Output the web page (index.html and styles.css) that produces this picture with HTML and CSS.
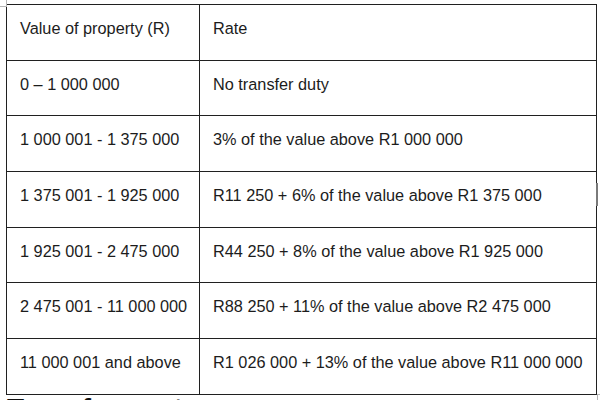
FILE: index.html
```html
<!DOCTYPE html>
<html lang="en">
<head>
<meta charset="utf-8">
<title>Transfer duty rates</title>
<link rel="stylesheet" href="styles.css">
</head>
<body>
<div class="page">
  <span class="corner corner-tl"></span>
  <span class="corner corner-br"></span>
  <span class="resize-mark"></span>
  <table class="rates">
    <tr><td class="c1">Value of property (R)</td><td class="c2">Rate</td></tr>
    <tr><td class="c1">0 – 1 000 000</td><td class="c2">No transfer duty</td></tr>
    <tr><td class="c1">1 000 001 - 1 375 000</td><td class="c2">3% of the value above R1 000 000</td></tr>
    <tr><td class="c1">1 375 001 - 1 925 000</td><td class="c2">R11 250 + 6% of the value above R1 375 000</td></tr>
    <tr><td class="c1">1 925 001 - 2 475 000</td><td class="c2">R44 250 + 8% of the value above R1 925 000</td></tr>
    <tr><td class="c1">2 475 001 - 11 000 000</td><td class="c2">R88 250 + 11% of the value above R2 475 000</td></tr>
    <tr><td class="c1">11 000 001 and above</td><td class="c2">R1 026 000 + 13% of the value above R11 000 000</td></tr>
  </table>
  <h2 class="next-heading">Transfer costs</h2>
</div>
</body>
</html>
```

FILE: styles.css
```css
html, body {
  margin: 0;
  padding: 0;
  background: #ffffff;
}

.page {
  position: relative;
  width: 600px;
  height: 400px;
  overflow: hidden;
  padding: 4px 0 0 6px;
  box-sizing: border-box;
  font-family: "Liberation Sans", Arial, sans-serif;
  color: #1c1c1c;
}

.rates {
  border-collapse: collapse;
  width: 591px;
  table-layout: fixed;
}

.rates tr {
  height: 55.7px;
}

.rates td {
  border: 1.3px solid #202020;
  font-size: 16.3px;
  line-height: 18px;
  padding: 14px 0 0 13px;
  vertical-align: top;
  white-space: nowrap;
}

.rates .c1 {
  width: 179px;
}

.next-heading {
  margin: 0;
  padding: 0 0 0 1px;
  font-size: 28px;
  line-height: 32px;
  height: 32px;
  font-weight: bold;
  color: #111;
  position: relative;
  top: -2px;
}

.corner {
  position: absolute;
  width: 6px;
  height: 6px;
  border-color: #b5b5b5;
  border-style: solid;
}

.corner-tl {
  left: 0;
  top: 0;
  border-width: 0 1px 1px 0;
}

.corner-br {
  left: 597px;
  top: 394px;
  border-width: 1px 0 0 1px;
}

.resize-mark {
  position: absolute;
  left: 596px;
  top: 183px;
  width: 2px;
  height: 23px;
  background: #7a7a7a;
}
```
